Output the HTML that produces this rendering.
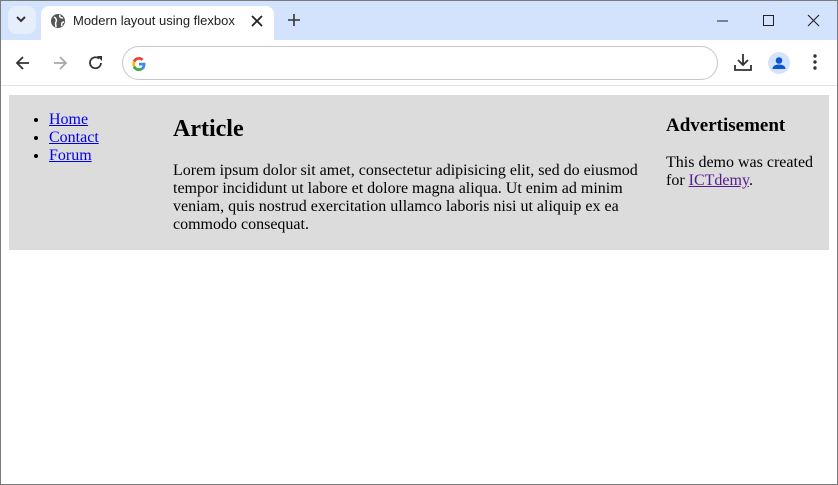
<!DOCTYPE html>
<html><head><style>
*{margin:0;padding:0;box-sizing:border-box}
body{width:838px;height:485px;overflow:hidden;background:#fff;font-family:"Liberation Serif",serif;position:relative}
.win{position:absolute;inset:0;border:1px solid #7a7a7a}
.strip{position:absolute;left:1px;top:1px;width:836px;height:39px;background:#d3e3fd}
.tab{position:absolute;left:41px;top:6px;width:233px;height:34px;background:#fff;border-radius:8px 8px 0 0;font:13px "Liberation Sans",sans-serif;color:#1f1f1f}
.tb{position:absolute;left:1px;top:40px;width:836px;height:46px;background:#fff;border-bottom:1px solid #e3e3e3}
.omni{position:absolute;left:121px;top:6px;width:596px;height:34px;border:1px solid #c7c7c7;border-radius:17px}
.main{position:absolute;left:9px;top:95px;width:820px;height:155px;background:#dcdcdc;font-size:16px;line-height:18px}
a{color:#0000ee}
</style></head><body>
<div class="win"></div>
<div class="strip">
 <div style="position:absolute;left:7px;top:5px;width:28px;height:28px;background:#e6eefc;border-radius:8px"></div>
 <svg style="position:absolute;left:14px;top:14px" width="12" height="8"><path d="M2 2l4 4 4-4" stroke="#333" stroke-width="2" fill="none"/></svg>
 <svg style="position:absolute;left:286px;top:12px" width="14" height="14"><path d="M7 1v12M1 7h12" stroke="#333" stroke-width="1.6"/></svg>
 <svg style="position:absolute;left:716px;top:13px" width="120" height="14"><path d="M0 7h11" stroke="#222" stroke-width="1"/><rect x="46.5" y="1.5" width="10" height="10" fill="none" stroke="#222"/><path d="M91 1l11 11M102 1l-11 11" stroke="#222" stroke-width="1.1"/></svg>
</div>
<div class="tab">
 <svg style="position:absolute;left:9px;top:7px" width="16" height="16"><circle cx="8" cy="8" r="7" fill="#555"/><path d="M4 4c2 1 3 3 2 5-1 1 0 3 0 5M10 2c-1 2 1 3 3 3M14 9c-2 0-3 2-2 4" stroke="#fff" stroke-width="1.5" fill="none"/></svg>
 <span style="position:absolute;left:32px;top:7px">Modern layout using flexbox</span>
 <svg style="position:absolute;left:210px;top:9px" width="12" height="12"><path d="M1 1l10 10M11 1l-10 10" stroke="#222" stroke-width="1.8"/></svg>
</div>
<div class="tb">
 <svg style="position:absolute;left:14px;top:15px" width="16" height="16"><path d="M14 8H2M8 2L2 8l6 6" stroke="#333" stroke-width="1.8" fill="none"/></svg>
 <svg style="position:absolute;left:51px;top:15px" width="16" height="16"><path d="M2 8h12M8 2l6 6-6 6" stroke="#aaa" stroke-width="1.8" fill="none"/></svg>
 <svg style="position:absolute;left:87px;top:15px" width="16" height="16"><path d="M13 8A5.5 5.5 0 1 1 11 3.5" stroke="#333" stroke-width="1.8" fill="none"/><path d="M9 1h5v5z" fill="#333"/></svg>
 <div class="omni">
  <svg style="position:absolute;left:8px;top:9px" width="16" height="16" viewBox="0 0 16 16"><path d="M14.5 8.2c0-.5 0-1-.1-1.4H8v2.7h3.7c-.2.9-.7 1.6-1.4 2.1l2.2 1.7c1.3-1.2 2-3 2-5.1z" fill="#4285f4"/><path d="M8 15c1.9 0 3.4-.6 4.5-1.7l-2.2-1.7c-.6.4-1.4.7-2.3.7-1.8 0-3.3-1.2-3.8-2.8L1.9 11.2C3 13.5 5.3 15 8 15z" fill="#34a853"/><path d="M4.2 9.5c-.3-.9-.3-1.8 0-2.6L1.9 5.1c-.9 1.8-.9 4 0 5.8z" fill="#fbbc05"/><path d="M8 3.8c1 0 1.9.4 2.6 1l1.9-1.9C11.3 1.7 9.7 1 8 1 5.3 1 3 2.5 1.9 4.8l2.3 1.8C4.7 5 6.2 3.8 8 3.8z" fill="#ea4335"/></svg>
 </div>
 <svg style="position:absolute;left:733px;top:13px" width="18" height="18"><path d="M9 1v11M4 7l5 5 5-5M1 12v5h16v-5" stroke="#333" stroke-width="1.8" fill="none"/></svg>
 <div style="position:absolute;left:767px;top:12px;width:22px;height:22px;border-radius:50%;background:#d3e3fd"></div>
 <svg style="position:absolute;left:767px;top:12px" width="22" height="22"><circle cx="11" cy="8.5" r="3.3" fill="#0b57d0"/><path d="M4.5 17c0-3 3-4.5 6.5-4.5s6.5 1.5 6.5 4.5z" fill="#0b57d0"/></svg>
 <svg style="position:absolute;left:811px;top:13px" width="6" height="18"><circle cx="3" cy="3" r="1.7" fill="#333"/><circle cx="3" cy="9" r="1.7" fill="#333"/><circle cx="3" cy="15" r="1.7" fill="#333"/></svg>
</div>
<div class="main">
 <ul style="position:absolute;left:40px;top:16px">
  <li><a href="#">Home</a></li><li><a href="#">Contact</a></li><li><a href="#">Forum</a></li>
 </ul>
 <div style="position:absolute;left:164px;top:21px;width:480px">
  <div style="font-size:24px;font-weight:bold;line-height:26px">Article</div>
  <p style="margin-top:20px">Lorem ipsum dolor sit amet, consectetur adipisicing elit, sed do eiusmod tempor incididunt ut labore et dolore magna aliqua. Ut enim ad minim veniam, quis nostrud exercitation ullamco laboris nisi ut aliquip ex ea commodo consequat.</p>
 </div>
 <div style="position:absolute;left:657px;top:21px;width:160px">
  <div style="font-size:19px;font-weight:bold;line-height:20px">Advertisement</div>
  <p style="margin-top:18px">This demo was created for <a href="#" style="color:#551a8b">ICTdemy</a>.</p>
 </div>
</div>
</body></html>
